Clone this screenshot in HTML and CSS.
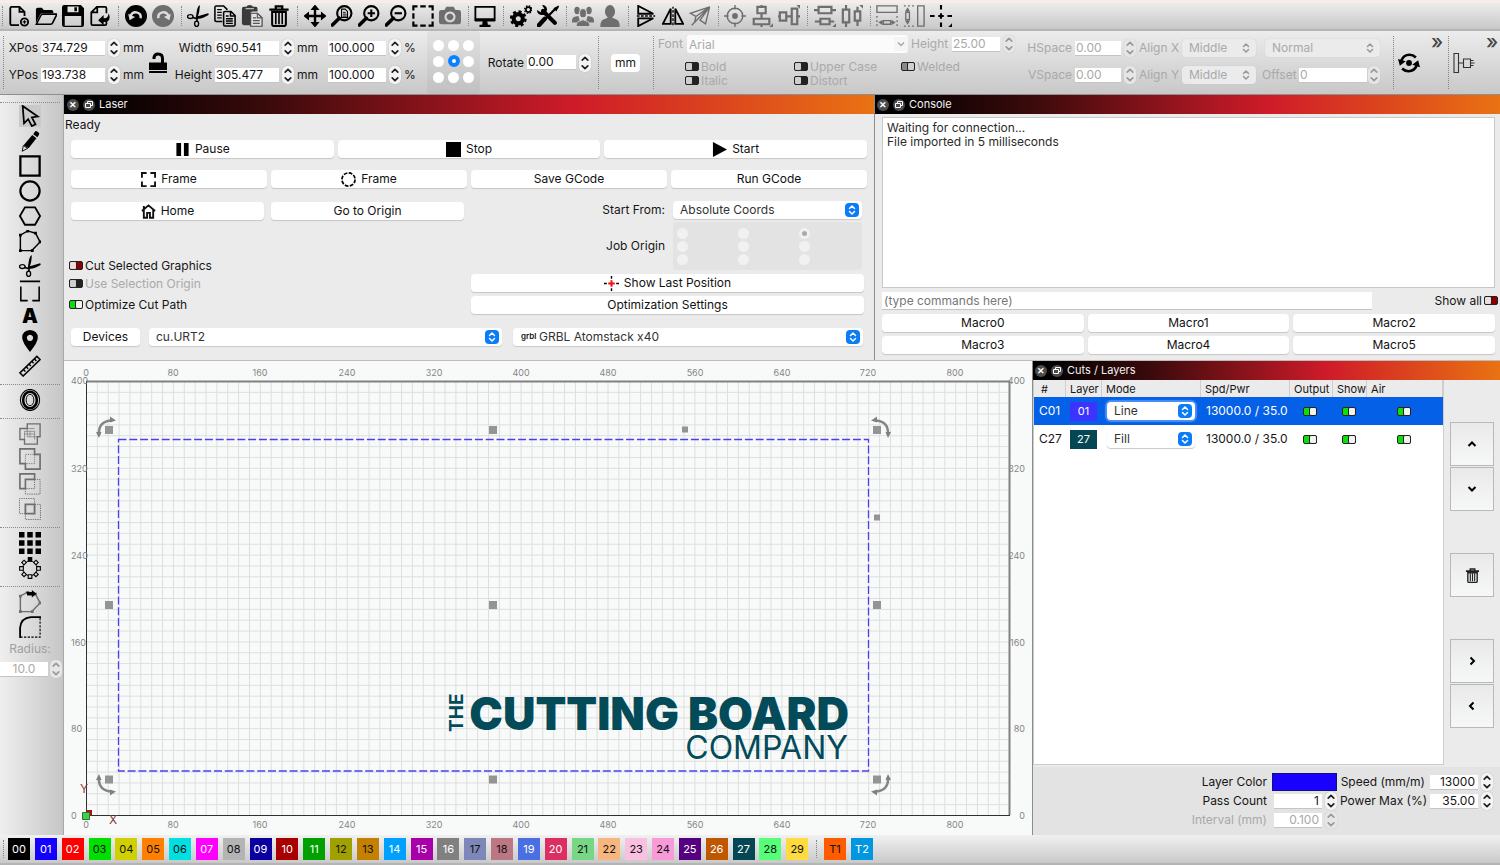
FILE: index.html
```html
<!DOCTYPE html>
<html lang="en">
<head>
<meta charset="utf-8">
<title>Laser workspace</title>
<link rel="stylesheet" href="styles.css">
</head>
<body>
<svg class="defs" aria-hidden="true">
  <symbol id="step" viewBox="0 0 10 16"><path d="M2.500 5.500 5 3l2.500 2.500M2.500 10.500 5 13l2.500-2.500" fill="none" stroke="currentColor" stroke-width="1.500" stroke-linecap="round" stroke-linejoin="round"/></symbol>
  <symbol id="updown" viewBox="0 0 14 14"><path d="M4.500 5.500 7 3l2.500 2.500M4.500 8.500 7 11l2.500-2.500" fill="none" stroke="currentColor" stroke-width="1.500" stroke-linecap="round" stroke-linejoin="round"/></symbol>
  <symbol id="new" viewBox="0 0 24 24"><path d="M12 22H4a1.500 1.500 0 0 1-1.500-1.500v-17A1.500 1.500 0 0 1 4 2h8.500L18 7.500V12M12.500 2v5.500H18" fill="none" stroke="currentColor" stroke-width="2"/><circle cx="18" cy="18.500" r="4" fill="none" stroke="currentColor" stroke-width="2"/><path d="M18 16.500v4M16 18.500h4" stroke="currentColor" stroke-width="1.300"/></symbol>
  <symbol id="open" viewBox="0 0 24 24"><path d="M1 20V5q0-2 2-2h4.500l2 2.500H18q2 0 2 2V9H8Q6.500 9 5.800 10.200z"/><path d="M1.500 21 6.500 11.200Q7 10 8.500 10H24l-4.800 9.600Q18.600 21 17 21z" fill="none" stroke="currentColor" stroke-width="1.800"/></symbol>
  <symbol id="save" viewBox="0 0 24 24"><path fill-rule="evenodd" d="M0 2.500Q0 0 2.500 0h18L24 3.500v18q0 2.500-2.500 2.500h-19Q0 24 0 21.500zM6 1.500V8h12V1.500zM3 12v10.500h18V12zM13.500 2.500h2.800v4.200h-2.800z"/></symbol>
  <symbol id="export" viewBox="0 0 24 24"><path d="M19 17v3.500a1.500 1.500 0 0 1-1.500 1.500H4a1.500 1.500 0 0 1-1.500-1.500V8L8.500 2h9A1.500 1.500 0 0 1 19 3.500V9M9 2v6H3" fill="none" stroke="currentColor" stroke-width="1.900"/><path d="M10 16.500 16 11v3.500q5 .5 5.500-5.500 3.500 9.500-5.500 9.500V22z"/></symbol>
  <symbol id="undo" viewBox="0 0 24 24"><circle cx="12" cy="12" r="12"/><path d="M6 12.500Q7.500 7.500 12.500 8q5.500 1 4.500 6.500" fill="none" stroke="#dcdcdc" stroke-width="2.600"/><path d="M3.500 9.500 5 16.500l6-3.500z" fill="#dcdcdc"/></symbol>
  <symbol id="cut" viewBox="0 0 24 24"><path d="M9.500 14.500 11 5q1-4 3-5-.2 8-2.200 12.200L23 9q1 .5.500 2-7 4.500-12 4z"/><ellipse cx="3.600" cy="12.600" rx="3" ry="2.100" fill="none" stroke="currentColor" stroke-width="1.500"/><ellipse cx="10.500" cy="20.500" rx="2.200" ry="2.900" fill="none" stroke="currentColor" stroke-width="1.500"/><path d="m6 13.500 5 1.500-.3 3" fill="none" stroke="currentColor" stroke-width="1.800"/></symbol>
  <symbol id="copy" viewBox="0 0 24 24"><path d="M9 18H2.500Q1 18 1 16.500v-14Q1 1 2.500 1h8L14 4.500v1M10.500 17.500v-9Q10.500 7 12 7h6.500L23 11.500v10q0 1.500-1.500 1.500H12q-1.500 0-1.500-1.500zM18 7v5h5" fill="none" stroke="currentColor" stroke-width="1.700"/><path d="M3.500 5h5M3.500 8h5M3.500 11h5M3.500 14h5M13 12h3M13 15h7.500M13 17.500h7.500M13 20h7.500" stroke="currentColor" stroke-width="1.500"/></symbol>
  <symbol id="paste" viewBox="0 0 24 24"><path d="M1 4q0-2 2-2h3q.5-2 3.500-2T13 2h3q2 0 2 2v3h-5q-3 0-3 3v12H3q-2 0-2-2z" fill="#3a3a3a"/><path d="M5 4h9" stroke="#ccc" stroke-width="1.200"/><path d="M10.500 9H18l5 5v9.200H10.500z" fill="#e2e2e2" stroke="#444" stroke-width="1.300"/><path d="M13 14h3.500M13 17h7.500M13 20h7.500M17.800 9v5H23" fill="none" stroke="#555" stroke-width="1.200"/></symbol>
  <symbol id="trash" viewBox="0 0 24 24"><path d="M1.500 5h21M8.500 4.500V1.500h7v3" fill="none" stroke="currentColor" stroke-width="2.500"/><path d="M4.500 7.500V21q0 2 2 2h11q2 0 2-2V7.500z" fill="none" stroke="currentColor" stroke-width="2.200"/><path d="M8.500 8.500V21M12 8.500V21M15.500 8.500V21" stroke="currentColor" stroke-width="1.800"/></symbol>
  <symbol id="move" viewBox="0 0 24 24"><path d="M12 2v20M2 12h20" stroke="currentColor" stroke-width="2.600"/><path d="m12-.5 5 6H7zM12 24.500l5-6H7zM-.5 12l6-5v10zM24.500 12l-6-5v10z"/></symbol>
  <symbol id="lens" viewBox="0 0 24 24"><circle cx="14.500" cy="9" r="7.800" fill="none" stroke="currentColor" stroke-width="2.300"/><path d="m9 14.500-7.500 7.300" stroke="currentColor" stroke-width="4" stroke-linecap="round"/></symbol>
  <symbol id="zoomdoc" viewBox="0 0 24 24"><use href="#lens"/><path d="M11.500 4.500h4l2.500 2.500v6.500h-6.500z" fill="none" stroke="currentColor" stroke-width="1.200"/><path d="M13 8h3M13 10h4M13 12h4" stroke="currentColor"/></symbol>
  <symbol id="zoomin" viewBox="0 0 24 24"><use href="#lens"/><path d="M10.500 9h8M14.500 5v8" stroke="currentColor" stroke-width="2.300"/></symbol>
  <symbol id="zoomout" viewBox="0 0 24 24"><use href="#lens"/><path d="M10.500 9h8" stroke="currentColor" stroke-width="2.300"/></symbol>
  <symbol id="frame" viewBox="0 0 24 24"><path d="M1.500 6V1.500H6M18 1.500h4.500V6M22.500 18v4.500H18M6 22.500H1.500V18M9 1.500h6M9 22.500h6M1.500 9v6M22.500 9v6" fill="none" stroke="currentColor" stroke-width="2.400"/></symbol>
  <symbol id="camera" viewBox="0 0 24 24"><path fill-rule="evenodd" d="M0 8q0-2.500 2.500-2.500H6L8 2h8l2 3.500h3.500Q24 5.500 24 8v10.500q0 2.500-2.500 2.500h-19Q0 21 0 18.500zM12 7a6 6 0 1 0 .01 0zm0 2.300a3.700 3.700 0 1 1-.01 0z"/></symbol>
  <symbol id="monitor" viewBox="0 0 24 24"><path d="M1.500 2h21v14.500h-21z" fill="none" stroke="currentColor" stroke-width="2"/><path d="M1 14.500h22V18H1zM9.500 18h5l.7 3.500H18V24H6v-2.500h2.800z"/></symbol>
  <symbol id="gears" viewBox="0 0 24 24"><circle cx="9" cy="15" r="5" fill="none" stroke="currentColor" stroke-width="4.500"/><circle cx="9" cy="15" r="7.800" fill="none" stroke="currentColor" stroke-width="2.800" stroke-dasharray="3.300 2.830"/><circle cx="20" cy="5" r="2.700" fill="none" stroke="currentColor" stroke-width="1.800"/><circle cx="20" cy="5" r="4" fill="none" stroke="currentColor" stroke-width="1.500" stroke-dasharray="1.700 1.440"/></symbol>
  <symbol id="tools" viewBox="0 0 24 24"><path d="m6.500 6.500 13 13" stroke="currentColor" stroke-width="4.600" stroke-linecap="round"/><path d="M0 5.500 4 8l4-4L5.500 0q5 0 5.500 5l-1 3.500L7 11 5 11Q0 10.500 0 5.500z"/><path d="M20.500 3.500 4 20.500" stroke="currentColor" stroke-width="2.400"/><path d="m2 22 6.500-7" stroke="currentColor" stroke-width="4.800" stroke-linecap="round"/><path d="m18 3.500 5.500-3L24 2l-3 5z"/></symbol>
  <symbol id="users" viewBox="0 0 24 24"><ellipse cx="5.500" cy="6" rx="3" ry="4"/><ellipse cx="18.500" cy="6" rx="3" ry="4"/><path d="M0 17.500q0-4.500 4-5l3-.5 2 7H0zM24 17.500q0-4.500-4-5l-3-.5-2 7h9z"/><ellipse cx="12" cy="9" rx="3.800" ry="5" stroke="#ddd"/><path d="M4.500 23.500q0-5.500 4-6l3.500-1.500 3.500 1.500q4 .5 4 6z" stroke="#d3d3d3"/></symbol>
  <symbol id="user" viewBox="0 0 24 24"><ellipse cx="12" cy="7" rx="5.500" ry="7"/><path d="M1.500 24q-.5-7 4-8.500l4-1.500V12h5v2l4 1.500q4.500 1.500 4 8.500z"/></symbol>
  <symbol id="flipv" viewBox="0 0 24 24"><path d="M3.500 1v8.500H20zM3.500 23v-8.500H20z" fill="none" stroke="currentColor" stroke-width="2"/><path d="M2 12h20" stroke="currentColor" stroke-width="1.500" stroke-dasharray="3 1.500"/></symbol>
  <symbol id="plane" viewBox="0 0 24 24"><path d="M22.500 2 1.500 9l6 3.500zM22.500 2 18 20.500l-6-4zM3 22 22.500 2M7.500 12.500 6 19.500" fill="none" stroke="currentColor" stroke-width="1.500"/></symbol>
  <symbol id="target" viewBox="0 0 24 24"><circle cx="12" cy="12" r="8.500" fill="none" stroke="currentColor" stroke-width="1.600"/><circle cx="12" cy="12" r="3.200"/><path d="M12 0v5M12 19v5M0 12h5M19 12h5" stroke="currentColor" stroke-width="1.500"/></symbol>
  <symbol id="alignv" viewBox="0 0 24 24"><path d="M7 2h9v7H7zM3 15h17v6H3zM11.500 0v2M11.500 10v5M11.500 21v3" fill="none" stroke="currentColor" stroke-width="2.400"/><path d="M24 20v4h-4z"/></symbol>
  <symbol id="distv" viewBox="0 0 24 24"><path d="M5 2h14v7H5zM7 15h10v6H7zM0 5.500h5M19 5.500h5M1 18h6M17 18h5" fill="none" stroke="currentColor" stroke-width="2.400"/><path d="M24 20v4h-4z"/></symbol>
  <symbol id="samew" viewBox="0 0 24 24"><path d="M1 1h22v7H1zM8 17h8v4H8zM3 19h5M16 19h5" fill="none" stroke="currentColor" stroke-width="1.500"/><path d="m3 19 4-3v6zM21 19l-4-3v6z"/><path d="M1 12v12M23 12v12" stroke="currentColor" stroke-width="1.500" stroke-dasharray="2 2.500"/></symbol>
  <symbol id="center" viewBox="0 0 24 24"><path d="M12 0v5M12 9v6M12 19v5M0 12h5M9 12h6M19 12h5" stroke="currentColor" stroke-width="2.300"/><path d="M24 20v4h-4z"/></symbol>
  <symbol id="arrow" viewBox="0 0 24 24"><path d="m4 1 1.500 19 4.500-4.500 4 7.500 4-2-4-7.500 6.500-1z" fill="none" stroke="currentColor" stroke-width="1.900"/></symbol>
  <symbol id="pencil" viewBox="0 0 24 24"><path d="M14.500 5.500 19 9l-8.500 11L5 16.500z"/><path d="m4.700 17-1.200 6.200L9.500 20z" fill="none" stroke="currentColor" stroke-width="1"/><path d="m15.500 4.500 1.800-2.700q1-1.300 2.500-.3l1.500 1.200q1.500 1 .5 2.500L20 8z"/></symbol>
  <symbol id="poly" viewBox="0 0 24 24"><path d="M1.500 5.500 9.500 1l8.500 2.500 5 9.500-9 9.500H1.500z" fill="none" stroke="currentColor" stroke-width="1.600"/><path d="M0 4h3v3H0zM8-.3h3v3H8zM16.500 2h3v3h-3zM21.500 11.500h3v3h-3zM13 21h3v3h-3zM0 21h3v3H0z"/></symbol>
  <symbol id="bracket" viewBox="0 0 24 24"><path d="M1 1.500h22M2 7v15.500h7.500M22 7v15.500h-7.500" fill="none" stroke="currentColor" stroke-width="1.700"/></symbol>
  <symbol id="pin" viewBox="0 0 24 24"><path fill-rule="evenodd" d="M12 0q8.500.5 8.500 8.500 0 5-8.500 15.500Q3.500 13.500 3.500 8.500 3.500.5 12 0zm0 5.200a3.400 3.400 0 1 0 .01 0z"/></symbol>
  <symbol id="ruler" viewBox="0 0 24 24"><path d="M1 19.500 19.500 1.500 23 5 4.500 23zM5 16l2 2M8 13l2 2M11 10l2 2M14 7l2 2M17 4.500l2 2" fill="none" stroke="currentColor" stroke-width="1.600"/></symbol>
  <symbol id="offset" viewBox="0 0 24 24"><ellipse cx="12" cy="12" rx="10.500" ry="11.500" fill="none" stroke="currentColor" stroke-width="1.200"/><ellipse cx="12" cy="12" rx="7.500" ry="9" fill="none" stroke="currentColor" stroke-width="2.800"/><ellipse cx="12" cy="12" rx="4.200" ry="6.200" fill="none" stroke="currentColor" stroke-width="1"/></symbol>
  <symbol id="weld" viewBox="0 0 24 24"><path d="M1 6h8V1h14v14h-3v8H6v-5H1z" fill="none" stroke="currentColor" stroke-width="1.500"/><path d="M6 9h11v9M9 6v9h11M6 18V9M17 6H9M12 9v6M6 12h11" fill="none" stroke="currentColor" stroke-width=".7"/></symbol>
  <symbol id="union" viewBox="0 0 24 24"><path d="M1 1h16v6h6v16H7v-6H1z" fill="none" stroke="currentColor" stroke-width="1.800"/><path d="M7 17V7h10v10z" fill="none" stroke="currentColor" stroke-width=".8" stroke-dasharray="1.500 1"/></symbol>
  <symbol id="subtract" viewBox="0 0 24 24"><path d="M1 1h16v6H7v10H1z" fill="none" stroke="currentColor" stroke-width="1.800"/><path d="M17 7h6v16H7v-6h10z" fill="none" stroke="currentColor" stroke-dasharray="1.500 1"/></symbol>
  <symbol id="intersect" viewBox="0 0 24 24"><path d="M7 17H.5V.5H17V7M17 7h6.500v16.500H7V17" fill="none" stroke="currentColor" stroke-dasharray="1.500 1"/><path d="M7 7h10v10H7z" fill="none" stroke="currentColor" stroke-width="2"/></symbol>
  <symbol id="array" viewBox="0 0 24 24"><path d="M0 0h6v6H0zM9 0h6v6H9zM18 0h6v6h-6zM0 9h6v6H0zM9 9h6v6H9zM18 9h6v6h-6zM0 18h6v6H0zM9 18h6v6H9zM18 18h6v6h-6z"/></symbol>
  <symbol id="circular" viewBox="0 0 24 24"><path d="M9.500 0h5v5h-5z"/><circle cx="12" cy="12.500" r="8" fill="none" stroke="currentColor"/><g fill="#ddd" stroke="currentColor" stroke-width="1.200"><path d="M.7 10.500h4v4h-4zM19.300 10.500h4v4h-4zM10 19.300h4v4h-4z"/><path d="m5.500 3.500 2.500 2.500-2.500 2.500L3 6zM18.500 3.500 21 6l-2.500 2.500L16 6zM5.500 16.500 8 19l-2.500 2.500L3 19zM18.500 16.500 21 19l-2.500 2.500L16 19z"/></g></symbol>
  <symbol id="radius" viewBox="0 0 24 24"><path d="M1.200 24V13Q2 2 13 1.200h11" fill="none" stroke="currentColor" stroke-width="2"/><path d="M23 2v21H1" fill="none" stroke="currentColor" stroke-width="1.200" stroke-dasharray="2.500 1.500"/></symbol>
  <symbol id="corners" viewBox="0 0 16 16"><path d="M1 6V1h5M10 1h5v5M15 10v5h-5M6 15H1v-5" fill="none" stroke="currentColor" stroke-width="2"/></symbol>
  <symbol id="home" viewBox="0 0 16 16"><path d="M1 7.500 8 1.500l7 6M3 6v8.700h3.500V9.500h3v5.200H13V6M3 5V2" fill="none" stroke="currentColor" stroke-width="2"/></symbol>
</svg>

<header class="toolbar toolbar-main">
  <i class="grip first"></i>
  <button class="tool" aria-label="New"><svg><use href="#new"/></svg></button>
  <button class="tool" aria-label="Open"><svg><use href="#open"/></svg></button>
  <button class="tool" aria-label="Save"><svg><use href="#save"/></svg></button>
  <button class="tool" aria-label="Import"><svg><use href="#export"/></svg></button>
  <i class="grip"></i>
  <button class="tool" aria-label="Undo"><svg><use href="#undo"/></svg></button>
  <button class="tool dim mirror" aria-label="Redo"><svg><use href="#undo"/></svg></button>
  <i class="grip"></i>
  <button class="tool" aria-label="Cut"><svg><use href="#cut"/></svg></button>
  <button class="tool" aria-label="Copy"><svg><use href="#copy"/></svg></button>
  <button class="tool" aria-label="Paste"><svg><use href="#paste"/></svg></button>
  <button class="tool" aria-label="Delete"><svg><use href="#trash"/></svg></button>
  <i class="grip"></i>
  <button class="tool" aria-label="Pan"><svg><use href="#move"/></svg></button>
  <button class="tool" aria-label="Zoom to page"><svg><use href="#zoomdoc"/></svg></button>
  <button class="tool" aria-label="Zoom in"><svg><use href="#zoomin"/></svg></button>
  <button class="tool" aria-label="Zoom out"><svg><use href="#zoomout"/></svg></button>
  <button class="tool" aria-label="Frame selection"><svg><use href="#frame"/></svg></button>
  <button class="tool dim" aria-label="Camera"><svg><use href="#camera"/></svg></button>
  <i class="grip"></i>
  <button class="tool" aria-label="Preview"><svg><use href="#monitor"/></svg></button>
  <i class="grip"></i>
  <button class="tool" aria-label="Settings"><svg><use href="#gears"/></svg></button>
  <button class="tool" aria-label="Device settings"><svg><use href="#tools"/></svg></button>
  <i class="grip"></i>
  <button class="tool dim" aria-label="Group"><svg><use href="#users"/></svg></button>
  <button class="tool dim" aria-label="Ungroup"><svg><use href="#user"/></svg></button>
  <i class="grip"></i>
  <button class="tool" aria-label="Flip vertical"><svg><use href="#flipv"/></svg></button>
  <button class="tool turn" aria-label="Flip horizontal"><svg><use href="#flipv"/></svg></button>
  <button class="tool dim" aria-label="Mirror across line"><svg><use href="#plane"/></svg></button>
  <i class="grip"></i>
  <button class="tool dim" aria-label="Align centers"><svg><use href="#target"/></svg></button>
  <button class="tool dim" aria-label="Align vertical"><svg><use href="#alignv"/></svg></button>
  <button class="tool dim turn" aria-label="Align horizontal"><svg><use href="#alignv"/></svg></button>
  <i class="grip"></i>
  <button class="tool dim" aria-label="Distribute vertical"><svg><use href="#distv"/></svg></button>
  <button class="tool dim turn" aria-label="Distribute horizontal"><svg><use href="#distv"/></svg></button>
  <i class="grip"></i>
  <button class="tool dim" aria-label="Same width"><svg><use href="#samew"/></svg></button>
  <button class="tool dim turnback" aria-label="Same height"><svg><use href="#samew"/></svg></button>
  <button class="tool" aria-label="Move to page center"><svg><use href="#center"/></svg></button>
</header>

<section class="toolbar toolbar-props">
  <i class="grip tall"></i>
  <div class="fields fields-pos">
    <label for="xpos">XPos</label><input id="xpos" value="374.729"><button class="step" aria-label="Step X"><svg><use href="#step"/></svg></button><span>mm</span>
    <label for="ypos">YPos</label><input id="ypos" value="193.738"><button class="step" aria-label="Step Y"><svg><use href="#step"/></svg></button><span>mm</span>
  </div>
  <button class="lock" aria-label="Lock aspect ratio"><svg viewBox="0 0 18 22"><path d="M5 7V5.500Q5.500 2 9 2q4.500 0 4.500 4.500V11" fill="none" stroke="#000" stroke-width="3"/><path d="M0 10.500h18V18H0zM0 19h18v2H0z"/></svg></button>
  <div class="fields fields-size">
    <label for="w">Width</label><input id="w" value="690.541"><button class="step" aria-label="Step width"><svg><use href="#step"/></svg></button><span>mm</span><input aria-label="Width percent" value="100.000"><button class="step" aria-label="Step width percent"><svg><use href="#step"/></svg></button><span>%</span>
    <label for="h">Height</label><input id="h" value="305.477"><button class="step" aria-label="Step height"><svg><use href="#step"/></svg></button><span>mm</span><input aria-label="Height percent" value="100.000"><button class="step" aria-label="Step height percent"><svg><use href="#step"/></svg></button><span>%</span>
  </div>
  <div class="anchor">
    <input type="radio" name="anchor" aria-label="Top left"><input type="radio" name="anchor" aria-label="Top"><input type="radio" name="anchor" aria-label="Top right">
    <input type="radio" name="anchor" aria-label="Left"><input type="radio" name="anchor" aria-label="Center" checked><input type="radio" name="anchor" aria-label="Right">
    <input type="radio" name="anchor" aria-label="Bottom left"><input type="radio" name="anchor" aria-label="Bottom"><input type="radio" name="anchor" aria-label="Bottom right">
  </div>
  <div class="fields fields-rotate">
    <label for="rot">Rotate</label><input id="rot" value="0.00"><button class="step" aria-label="Step rotation"><svg><use href="#step"/></svg></button>
  </div>
  <i class="grip tall"></i>
  <button class="unit">mm</button>
  <i class="grip tall"></i>
  <div class="font-box off">
    <div class="font-row">
      <label for="font">Font</label>
      <span class="combo"><input id="font" value="Arial" disabled><svg viewBox="0 0 14 14"><path d="m4 5.500 3 3 3-3" fill="none" stroke="currentColor" stroke-width="1.500"/></svg></span>
      <label for="fh">Height</label><input id="fh" class="fh" value="25.00" disabled><button class="step" aria-label="Step font height" disabled><svg><use href="#step"/></svg></button>
    </div>
    <div class="font-flags">
      <label><input class="toggle" type="checkbox" disabled>Bold</label><label><input class="toggle" type="checkbox" disabled>Upper Case</label><label><input class="toggle" type="checkbox" checked disabled>Welded</label>
      <label><input class="toggle" type="checkbox" disabled>Italic</label><label><input class="toggle" type="checkbox" disabled>Distort</label>
    </div>
  </div>
  <div class="fields fields-space off">
    <label for="hs">HSpace</label><input id="hs" value="0.00" disabled><button class="step" aria-label="Step HSpace" disabled><svg><use href="#step"/></svg></button><label for="ax">Align X</label><span class="select"><select id="ax" disabled><option>Middle</option></select><svg><use href="#updown"/></svg></span>
    <label for="vs">VSpace</label><input id="vs" value="0.00" disabled><button class="step" aria-label="Step VSpace" disabled><svg><use href="#step"/></svg></button><label for="ay">Align Y</label><span class="select"><select id="ay" disabled><option>Middle</option></select><svg><use href="#updown"/></svg></span>
  </div>
  <div class="style-box off">
    <span class="select"><select aria-label="Text style" disabled><option>Normal</option></select><svg><use href="#updown"/></svg></span>
    <div class="offset-row"><label for="off">Offset</label><input id="off" value="0" disabled><button class="step" aria-label="Step offset" disabled><svg><use href="#step"/></svg></button></div>
  </div>
  <i class="grip tall"></i>
  <button class="plain" aria-label="Refresh"><svg viewBox="0 0 24 22"><circle cx="12" cy="11" r="3.200"/><path d="M3.500 8.500Q6 2 12.500 2q4 0 7 3M20.500 13.500Q18 20 11.500 20q-4 0-7-3" fill="none" stroke="#000" stroke-width="2.800"/><path d="M0 6.500 8.500 9 2 14zM24 15.500 15.500 13 22 8z"/></svg></button>
  <button class="more" aria-label="More">»</button>
  <i class="grip tall"></i>
  <button class="plain" aria-label="Docking"><svg viewBox="0 0 22 22"><path d="M1 1.500h4.500v19H1zM10.500 7h7v8.500h-7zM5.500 11h5M17.500 8.500h3M17.500 11h4M17.500 13.500h3" fill="none" stroke="#333" stroke-width="1.100"/></svg></button>
  <button class="more" aria-label="More">»</button>
</section>

<main class="work">
  <nav class="side">
    <i class="rule"></i>
    <button class="tool selected" aria-label="Select"><svg><use href="#arrow"/></svg></button>
    <button class="tool" aria-label="Draw lines"><svg><use href="#pencil"/></svg></button>
    <button class="tool" aria-label="Rectangle"><svg viewBox="0 0 24 24"><path d="M1.500 1.500h21v21h-21z" fill="none" stroke="#000" stroke-width="2.500"/></svg></button>
    <button class="tool" aria-label="Ellipse"><svg viewBox="0 0 24 24"><circle cx="12" cy="12" r="10.500" fill="none" stroke="#000" stroke-width="2.400"/></svg></button>
    <button class="tool" aria-label="Polygon"><svg viewBox="0 0 24 24"><path d="M6.500 2.500h11L23 12l-5.500 9.500h-11L1 12z" fill="none" stroke="#000" stroke-width="2"/></svg></button>
    <button class="tool" aria-label="Edit nodes"><svg><use href="#poly"/></svg></button>
    <button class="tool" aria-label="Trim shapes"><svg><use href="#cut"/></svg></button>
    <button class="tool" aria-label="Tabs"><svg><use href="#bracket"/></svg></button>
    <button class="tool letter" aria-label="Text">A</button>
    <button class="tool" aria-label="Position laser"><svg><use href="#pin"/></svg></button>
    <button class="tool" aria-label="Measure"><svg><use href="#ruler"/></svg></button>
    <i class="rule"></i>
    <button class="tool" aria-label="Offset shapes"><svg><use href="#offset"/></svg></button>
    <i class="rule"></i>
    <button class="tool dim" aria-label="Weld"><svg><use href="#weld"/></svg></button>
    <button class="tool dim" aria-label="Union"><svg><use href="#union"/></svg></button>
    <button class="tool dim" aria-label="Subtract"><svg><use href="#subtract"/></svg></button>
    <button class="tool dim" aria-label="Intersection"><svg><use href="#intersect"/></svg></button>
    <i class="rule"></i>
    <button class="tool" aria-label="Grid array"><svg><use href="#array"/></svg></button>
    <button class="tool" aria-label="Circular array"><svg><use href="#circular"/></svg></button>
    <i class="rule"></i>
    <button class="tool dim" aria-label="Start point"><svg viewBox="0 0 24 24"><use href="#poly"/><path d="M8 1h6v-2l5 4-5 4V5H9z" fill="#000"/></svg></button>
    <button class="tool" aria-label="Fillet"><svg><use href="#radius"/></svg></button>
    <label class="radius-label" for="radius">Radius:</label>
    <div class="radius-row off"><input id="radius" value="10.0" disabled><button class="step" aria-label="Step radius" disabled><svg><use href="#step"/></svg></button></div>
  </nav>

  <div class="docks">
    <div class="upper">
      <section class="panel laser">
        <h2 class="title"><button aria-label="Close">✕</button><button aria-label="Float"><svg viewBox="0 0 10 10"><path d="M3.500 3.500v-2h5v4h-2M1.500 3.500h5v4h-5z" fill="none" stroke="#fff"/></svg></button>Laser</h2>
        <p class="status">Ready</p>
        <div class="row three">
          <button class="btn"><svg viewBox="0 0 16 16"><path d="M1.500 1h5v14h-5zM9.500 1h5v14h-5z"/></svg>Pause</button>
          <button class="btn"><svg viewBox="0 0 16 16"><path d="M0 0h16v16H0z"/></svg>Stop</button>
          <button class="btn"><svg viewBox="0 0 16 16"><path d="M1 0v16l15-8z"/></svg>Start</button>
        </div>
        <div class="row four">
          <button class="btn"><svg><use href="#corners"/></svg>Frame</button>
          <button class="btn"><svg viewBox="0 0 16 16"><circle cx="8" cy="8" r="7" fill="none" stroke="#000" stroke-width="1.800" stroke-dasharray="4 1.500"/></svg>Frame</button>
          <button class="btn">Save GCode</button>
          <button class="btn">Run GCode</button>
        </div>
        <div class="halves">
          <div class="left">
            <div class="pair"><button class="btn"><svg><use href="#home"/></svg>Home</button><button class="btn">Go to Origin</button></div>
            <div class="checks">
              <label><input class="toggle" type="checkbox">Cut Selected Graphics</label>
              <label class="faint"><input class="toggle" type="checkbox" disabled>Use Selection Origin</label>
              <label><input class="toggle" type="checkbox" checked>Optimize Cut Path</label>
            </div>
          </div>
          <div class="right">
            <div class="origin-grid">
              <label for="from">Start From:</label><span class="select"><select id="from"><option>Absolute Coords</option></select><svg><use href="#updown"/></svg></span>
              <span>Job Origin</span>
              <div class="job">
                <input type="radio" name="job" aria-label="Top left" disabled><input type="radio" name="job" aria-label="Top" disabled><input type="radio" name="job" aria-label="Top right" checked disabled>
                <input type="radio" name="job" aria-label="Left" disabled><input type="radio" name="job" aria-label="Center" disabled><input type="radio" name="job" aria-label="Right" disabled>
                <input type="radio" name="job" aria-label="Bottom left" disabled><input type="radio" name="job" aria-label="Bottom" disabled><input type="radio" name="job" aria-label="Bottom right" disabled>
              </div>
            </div>
            <button class="btn"><svg viewBox="0 0 16 16"><path d="M8 0v3M8 13v3M0 8h3M13 8h3" stroke="#000" stroke-width="1.500"/><path d="M8 4.500v7M4.500 8h7" stroke="#f01010" stroke-width="2.200"/></svg>Show Last Position</button>
            <button class="btn">Optimization Settings</button>
          </div>
        </div>
        <div class="devices">
          <button class="btn">Devices</button>
          <span class="select"><select aria-label="Port"><option>cu.URT2</option></select><svg><use href="#updown"/></svg></span>
          <span class="select grbl"><i>grbl</i><select aria-label="Device"><option>GRBL Atomstack x40</option></select><svg><use href="#updown"/></svg></span>
        </div>
      </section>

      <section class="panel console">
        <h2 class="title"><button aria-label="Close">✕</button><button aria-label="Float"><svg viewBox="0 0 10 10"><path d="M3.500 3.500v-2h5v4h-2M1.500 3.500h5v4h-5z" fill="none" stroke="#fff"/></svg></button>Console</h2>
        <div class="console-body">
          <textarea aria-label="Console output" readonly>Waiting for connection...
File imported in 5 milliseconds</textarea>
          <div class="command"><input aria-label="Command" placeholder="(type commands here)"><label>Show all<input class="toggle" type="checkbox"></label></div>
          <div class="macros">
            <button class="btn">Macro0</button><button class="btn">Macro1</button><button class="btn">Macro2</button>
            <button class="btn">Macro3</button><button class="btn">Macro4</button><button class="btn">Macro5</button>
          </div>
        </div>
      </section>
    </div>

    <div class="lower">
      <svg class="canvas" viewBox="64 361 968 474" preserveAspectRatio="xMinYMin meet">
        <defs>
          <pattern id="grid" x="86" y="381" width="10.865" height="10.850" patternUnits="userSpaceOnUse"><path d="M0 .5h11M.5 0v11" stroke="#dddfde" fill="none"/></pattern>
          <g id="spin"><path d="M-10 6Q-11-8 3-8.500" fill="none" stroke="#858585" stroke-width="2.500"/><path d="m1-12.500 6 4-6 2zM-13 3l3 6 2.500-6z" fill="#808080"/></g>
        </defs>
        <path d="M86 381h923v434H86z" fill="url(#grid)"/>
        <path d="M86 381.500h923.500V815" fill="none" stroke="#808080" stroke-width="2"/>
        <path d="M86.500 381v434.500H1010" fill="none" stroke="#303030"/>
        <g class="ruler mid">
          <text x="86" y="376">0</text><text x="173" y="376">80</text><text x="260" y="376">160</text><text x="347" y="376">240</text><text x="434" y="376">320</text><text x="521" y="376">400</text><text x="608" y="376">480</text><text x="695" y="376">560</text><text x="782" y="376">640</text><text x="868" y="376">720</text><text x="955" y="376">800</text>
          <text x="86" y="828">0</text><text x="173" y="828">80</text><text x="260" y="828">160</text><text x="347" y="828">240</text><text x="434" y="828">320</text><text x="521" y="828">400</text><text x="608" y="828">480</text><text x="695" y="828">560</text><text x="782" y="828">640</text><text x="868" y="828">720</text><text x="955" y="828">800</text>
        </g>
        <g class="ruler">
          <text x="71" y="384">400</text><text x="71" y="472">320</text><text x="71" y="559">240</text><text x="71" y="646">160</text><text x="71" y="732">80</text><text x="71" y="819">0</text>
        </g>
        <g class="ruler end">
          <text x="1025" y="384">400</text><text x="1025" y="472">320</text><text x="1025" y="559">240</text><text x="1025" y="646">160</text><text x="1025" y="732">80</text><text x="1025" y="819">0</text>
        </g>
        <g class="axis"><text x="80" y="793">Y</text><text x="109" y="824">X</text></g>
        <path d="M86 810h6v6h-6z" fill="#a01414"/><path d="M82.500 812.500h7v7h-7z" fill="#3ecf4c" stroke="#2a7a32"/>
        <path d="M118.500 439.500h750v331.500h-750z" fill="none" stroke="#4b40f0" stroke-width="1.300" stroke-dasharray="8 2.800"/>
        <path d="M105 426h8v8h-8zM489 426h8v8h-8zM873 426h8v8h-8zM105 601h8v8h-8zM489 601h8v8h-8zM873 601h8v8h-8zM105 775.500h8v8h-8zM489 775.500h8v8h-8zM873 775.500h8v8h-8zM682 426.500h6v6h-6zM874 514.500h6v6h-6z" fill="#949494"/>
        <use href="#spin" x="109" y="429"/>
        <use href="#spin" transform="translate(878 429) scale(-1 1)"/>
        <use href="#spin" transform="translate(109 783) scale(1 -1)"/>
        <use href="#spin" transform="translate(878 783) scale(-1 -1)"/>
        <g class="logo">
          <text class="the" transform="translate(463 732) rotate(-90)">THE</text>
          <text class="cutting" x="849" y="730">CUTTING BOARD</text>
          <text class="company" x="848" y="759">COMPANY</text>
        </g>
      </svg>

      <section class="panel cuts">
        <h2 class="title"><button aria-label="Close">✕</button><button aria-label="Float"><svg viewBox="0 0 10 10"><path d="M3.500 3.500v-2h5v4h-2M1.500 3.500h5v4h-5z" fill="none" stroke="#fff"/></svg></button>Cuts / Layers</h2>
        <div class="cuts-body">
          <div class="table-wrap">
            <table>
              <colgroup><col class="c-num"><col class="c-layer"><col class="c-mode"><col class="c-spd"><col class="c-out"><col class="c-show"><col></colgroup>
              <thead><tr><th>#</th><th>Layer</th><th>Mode</th><th>Spd/Pwr</th><th>Output</th><th>Show</th><th>Air</th></tr></thead>
              <tbody>
                <tr class="active"><td>C01</td><td><b class="chip blue">01</b></td><td><span class="select"><select aria-label="Mode C01"><option>Line</option></select><svg><use href="#updown"/></svg></span></td><td>13000.0 / 35.0</td><td class="tick"><input class="toggle" type="checkbox" aria-label="Output C01" checked></td><td class="tick"><input class="toggle" type="checkbox" aria-label="Show C01" checked></td><td class="tick"><input class="toggle" type="checkbox" aria-label="Air C01" checked></td></tr>
                <tr><td>C27</td><td><b class="chip teal">27</b></td><td><span class="select"><select aria-label="Mode C27"><option>Fill</option></select><svg><use href="#updown"/></svg></span></td><td>13000.0 / 35.0</td><td class="tick"><input class="toggle" type="checkbox" aria-label="Output C27" checked></td><td class="tick"><input class="toggle" type="checkbox" aria-label="Show C27" checked></td><td class="tick"><input class="toggle" type="checkbox" aria-label="Air C27" checked></td></tr>
              </tbody>
            </table>
          </div>
          <div class="order">
            <button aria-label="Move up"><svg viewBox="0 0 12 12"><path d="m2.500 8 3.500-3.500L9.500 8"/></svg></button>
            <button aria-label="Move down"><svg viewBox="0 0 12 12"><path d="m2.500 4 3.500 3.500L9.500 4"/></svg></button>
            <button class="apart" aria-label="Delete layer"><svg class="bin"><use href="#trash"/></svg></button>
            <button class="apart" aria-label="Next"><svg viewBox="0 0 12 12"><path d="M4.500 2.500 8 6 4.500 9.500"/></svg></button>
            <button aria-label="Previous"><svg viewBox="0 0 12 12"><path d="M7.500 2.500 4 6l3.500 3.500"/></svg></button>
          </div>
        </div>
        <div class="params">
          <span>Layer Color</span><button class="swatch" aria-label="Layer Color"></button><label for="speed">Speed (mm/m)</label><input id="speed" value="13000"><button class="step" aria-label="Step speed"><svg><use href="#step"/></svg></button>
          <label for="pass">Pass Count</label><input id="pass" value="1"><button class="step" aria-label="Step pass count"><svg><use href="#step"/></svg></button><label for="power">Power Max (%)</label><input id="power" value="35.00"><button class="step" aria-label="Step power"><svg><use href="#step"/></svg></button>
          <label class="faint" for="interval">Interval (mm)</label><input id="interval" value="0.100" disabled><button class="step" aria-label="Step interval" disabled><svg><use href="#step"/></svg></button>
        </div>
      </section>
    </div>
  </div>
</main>

<footer class="palette">
  <i class="grip"></i>
  <div class="colors">
    <button class="k00 lt">00</button><button class="k01 lt">01</button><button class="k02 lt">02</button><button class="k03">03</button><button class="k04">04</button><button class="k05">05</button><button class="k06">06</button><button class="k07 lt">07</button><button class="k08">08</button><button class="k09 lt">09</button><button class="k10 lt">10</button><button class="k11 lt">11</button><button class="k12">12</button><button class="k13">13</button><button class="k14 lt">14</button><button class="k15 lt">15</button><button class="k16 lt">16</button><button class="k17">17</button><button class="k18">18</button><button class="k19 lt">19</button><button class="k20 lt">20</button><button class="k21">21</button><button class="k22">22</button><button class="k23">23</button><button class="k24">24</button><button class="k25 lt">25</button><button class="k26 lt">26</button><button class="k27 lt">27</button><button class="k28">28</button><button class="k29">29</button>
  </div>
  <i class="grip"></i>
  <div class="tools-colors"><button class="t1">T1</button><button class="t2 lt">T2</button></div>
</footer>
</body>
</html>
```
FILE: styles.css
```css
*, *::before { box-sizing: border-box; }
body { margin: 0; min-height: 100vh; display: flex; flex-direction: column; background: #ebebeb; color: #161616; font: 12px/16px Inter, "Liberation Sans", sans-serif; border-top: 3px solid #f6eeea; border-bottom: 2px solid #b4b4b4; }
button, input, select, textarea { font: inherit; color: inherit; margin: 0; border: 0; padding: 0; background: none; border-radius: 0; min-width: 0; }
h2, p { margin: 0; font-weight: 400; }
.defs { position: absolute; width: 0; height: 0; }
.off, .faint, input:disabled { color: #a9a9a9; }

/* toolbars */
.toolbar { display: flex; background: linear-gradient(#ececec, #c8c8c8); }
.toolbar-main { gap: 5px; height: 28px; border-bottom: 2px solid #b5b5b5; }
.grip { flex: none; width: 4px; align-self: stretch; margin: 3px 0; border-right: 1px dotted #858585; }
.toolbar-main .grip { width: 3px; margin-right: 1px; }
.toolbar-main .grip:nth-of-type(odd) { margin-right: 0; }
.tool { flex: none; width: 22px; height: 22px; padding: 0; display: block; align-self: center; color: #000; }
.tool svg { display: block; width: 22px; height: 22px; fill: currentColor; overflow: visible; }
.tool.dim { color: #6e6e6e; }
.mirror svg { transform: scaleX(-1); }
.turn svg { transform: rotate(-90deg); }
.turnback svg { transform: rotate(90deg); }
.letter { font-weight: 900; font-size: 20px; line-height: 22px; text-align: center; }

.toolbar-props { height: 64px; border-bottom: 1px solid #8f8f8f; align-items: center; }
.grip.tall { margin: 5px 0; }
.fields { display: grid; align-items: center; row-gap: 9px; padding-bottom: 2px; }
.fields > label { text-align: right; }
.fields input, .offset-row input, .fh, .radius-row input, .params input { height: 15px; background: #fff; padding: 0 1px; border-bottom: 1px solid #c4c4c4; }
.fields-pos { grid-template-columns: 34px 64px 12px 20px; column-gap: 3px; }
.fields-size { grid-template-columns: 41px 64px 12px 28px 58px 12px 10px; column-gap: 3px; }
.fields-rotate { grid-template-columns: 38px 49px 12px; column-gap: 3px; margin-left: 6px; margin-right: 4px; padding-bottom: 0; }
.step { width: 12px; height: 18px; border-radius: 5px; background: #f4f4f4; box-shadow: 0 0 1px #999; color: #222; display: block; }
.step svg { display: block; width: 12px; height: 18px; }
.step:disabled { color: #9a9a9a; background: #e6e6e6; box-shadow: 0 0 1px #bbb; }
.lock { flex: none; width: 18px; height: 22px; margin: 0 4px 0 6px; }
.lock svg, .plain svg { display: block; width: 100%; height: 100%; }
.anchor { align-self: stretch; width: 53px; margin-left: 13px; padding: 6px 4px; background: rgba(0,0,0,.04); border-radius: 4px; display: grid; grid-template-columns: repeat(3, 15px); grid-auto-rows: 16px; place-items: center; }
input[type=radio] { appearance: none; width: 11px; height: 11px; border-radius: 50%; background: #fff; }
.anchor input:checked { width: 12px; height: 12px; background: #fff; border: 4px solid #0a82ff; }
.unit { width: 29px; height: 18px; border-radius: 4px; background: #fff; margin: 0 10px 0 12px; }
.font-box { width: 368px; margin-left: 4px; align-self: stretch; padding-top: 4px; }
.font-row { display: grid; grid-template-columns: 26px 221px 38px 48px 12px; column-gap: 3px; align-items: center; }
.combo { position: relative; height: 18px; background: #fbfbfb; border-radius: 3px; }
.combo input { width: 100%; padding-left: 2px; height: 18px; display: block; }
.combo svg { position: absolute; right: 0; top: 2px; width: 14px; height: 14px; background: #f5f5f5; border-radius: 3px; }
.fh { width: 100%; }
.font-flags { display: grid; grid-template-columns: 109px 107px 1fr; padding-left: 27px; margin-top: 7px; }
.font-flags label { height: 14px; line-height: 14px; white-space: nowrap; }
.toggle { appearance: none; position: relative; display: inline-block; width: 14px; height: 9px; vertical-align: 0; margin-right: 2px; border: 1px solid #222; border-radius: 2px; background: #8c0000; }
.toggle::before { content: ""; position: absolute; left: -1px; top: -1px; width: 8px; height: 9px; border: 1px solid #222; border-radius: 2px; background: #ecdcdc; }
.toggle:checked { background: #0be00b; }
.toggle:checked::before { left: 5px; background: #f0f4f0; }
.toggle:disabled { background: #222; }
.toggle:disabled::before { background: #cfcfcf; }
.toggle:checked:disabled { background: #888; }
.fields-space { grid-template-columns: 46px 46px 12px 40px 74px; column-gap: 3px; }
.fields-space label { white-space: nowrap; }
.style-box { margin: 0 10px 0 6px; width: 118px; display: flex; flex-direction: column; gap: 9px; padding-bottom: 2px; }
.style-box > .select { margin-left: 3px; }
.offset-row { display: grid; grid-template-columns: 36px 68px 12px; column-gap: 1px; align-items: center; }
.select { position: relative; display: block; min-width: 0; color: #333; }
.select select { appearance: none; display: block; width: 100%; height: 18px; border-radius: 4px; background: #fff; padding: 0 20px 0 7px; box-shadow: 0 1px 1px #c9c9c9; }
.select svg { position: absolute; right: 3px; top: 2px; width: 14px; height: 14px; border-radius: 4px; background: #0a7cf5; color: #fff; pointer-events: none; }
.off .select { color: #a9a9a9; }
.off .select select { background: #ebebeb; opacity: 1; color: #a9a9a9; box-shadow: 0 0 1px #bbb; }
.off .select svg { background: none; color: #999; }
.plain { flex: none; width: 22px; height: 22px; margin-left: 4px; }
.more { align-self: flex-start; width: 16px; height: 20px; font-size: 20px; font-weight: 500; line-height: 16px; margin-left: 9px; color: #444; padding-top: 2px; }

/* work area */
.work { flex: 1; display: flex; min-height: 0; }
.side { flex: none; width: 64px; background: linear-gradient(90deg, #efefef, #c6c6c6); border-right: 1px solid #a8a8a8; display: flex; flex-direction: column; align-items: center; gap: 3px; padding: 5px 3px 0 0; }
.side .rule { flex: none; width: 100%; height: 1px; margin: 4px 0 1px; border-top: 1px dotted #8a8a8a; }
.side .rule:first-child { margin: 2px 0 -1px; }
.side .selected { background: #c9c9c9; }
.radius-label { color: #a0a0a0; }
.radius-row { align-self: stretch; margin-right: -3px; display: grid; grid-template-columns: 1fr 12px; column-gap: 2px; padding-right: 1px; align-items: center; }
.radius-row input { text-align: center; }
.docks { flex: 1; min-width: 0; display: flex; flex-direction: column; }
.upper { flex: none; display: grid; grid-template-columns: 810fr 626fr; min-height: 266px; border-bottom: 1px solid #bdbdbd; }
.lower { flex: 1; display: flex; min-height: 0; }
.panel { min-width: 0; display: flex; flex-direction: column; }
.console, .cuts { border-left: 1px solid #8c8c8c; }
.title { flex: none; height: 19px; display: flex; align-items: center; gap: 4px; padding-left: 2px; color: #f2f2f2; font-size: 11px; line-height: 19px; background: linear-gradient(90deg, #000 3%, #3a0a0b 25%, #cf1b29 63%, #e97212); }
.title button { width: 12px; height: 12px; border-radius: 50%; background: #4c4c4c; color: #fff; font-size: 9px; font-weight: 700; line-height: 12px; }
.title svg { display: block; width: 10px; height: 10px; margin: 1px; }
.laser .title { padding-left: 3px; }
.status { padding: 3px 1px 7px; }
.btn { height: 18px; border-radius: 4px; background: #fff; box-shadow: 0 1px 1px #c6c6c6; display: flex; align-items: center; justify-content: center; gap: 5px; color: #111; }
.btn svg { width: 15px; height: 15px; }
.row { display: grid; gap: 4px; padding: 0 7px; }
.three { grid-template-columns: repeat(3, 1fr); }
.four { grid-template-columns: repeat(4, 1fr); margin-top: 12px; }
.halves { display: grid; grid-template-columns: 1fr 1fr; gap: 4px; padding: 0 7px; margin-top: 13px; }
.pair { display: grid; grid-template-columns: 1fr 1fr; gap: 7px; padding-right: 3px; padding-top: 1px; }
.checks { display: flex; flex-direction: column; margin: 38px 0 0 -2px; gap: 2px; }
.checks label:last-child { margin-top: 3px; }
.right { display: flex; flex-direction: column; gap: 4px; padding-right: 3px; }
.origin-grid { display: grid; grid-template-columns: 1fr 189px; gap: 3px 8px; align-items: center; text-align: right; padding-right: 2px; }
.job { height: 48px; display: grid; grid-template-columns: 61px 61px 1fr; grid-template-rows: repeat(3, 13px); padding: 5px 4px; border-radius: 3px; background: #e3e3e3; align-items: center; }
.job input { background: #f1f1f1; }
.job input:checked { border: 3px solid #f1f1f1; background: #aaa; }
.devices { display: grid; grid-template-columns: 69px 352fr 351fr; column-gap: 9px; padding: 0 11px 0 7px; margin-top: 14px; }
.devices .select + .select { margin-left: 2px; }
.grbl i { position: absolute; left: 8px; top: 0; font-size: 8px; font-style: normal; font-weight: 600; line-height: 16px; color: #111; }
.grbl select { padding-left: 26px; }
.console-body { flex: 1; display: flex; flex-direction: column; padding: 3px 5px 6px 7px; }
textarea { flex: 1; resize: none; background: #fff; border: 1px solid #c8c8c8; padding: 3px 4px; line-height: 14px; color: #2a2a2a; outline: 0; }
.command { display: flex; justify-content: space-between; align-items: center; margin: 4px -3px 4px 0; }
.command > input { flex: 0 1 490px; height: 18px; background: #fff; padding: 0 2px; border-bottom: 1px solid #c4c4c4; }
.command ::placeholder { color: #777; }
.command label { white-space: nowrap; }
.command .toggle { margin: 0 0 0 2px; }
.macros { display: grid; grid-template-columns: repeat(3, 1fr); gap: 4px; }

/* drawing canvas */
.canvas { flex: 1; min-width: 0; height: auto; background: #f8faf9; align-self: stretch; }
.ruler text { font: 9px Inter, sans-serif; fill: #858585; }
.mid text { text-anchor: middle; }
.end text { text-anchor: end; }
.axis text { font: 12px Inter, sans-serif; fill: #8c3a3a; }
.logo text { font-family: Inter, sans-serif; fill: #044b59; text-anchor: end; }
.logo .the { font-size: 19px; font-weight: 700; text-anchor: start; }
.logo .cutting { font-size: 45px; font-weight: 900; }
.logo .company { font-size: 32px; font-weight: 400; }

/* cuts panel */
.cuts { flex: 0 0 468px; }
.cuts-body { flex: 1; display: flex; }
.table-wrap { flex: 1; background: #fff; border: solid #ccc; border-width: 0 1px 1px; }
table { width: 100%; border-collapse: collapse; table-layout: fixed; }
.c-num { width: 32px; } .c-layer { width: 36px; } .c-mode { width: 99px; } .c-spd { width: 89px; } .c-out { width: 43px; } .c-show { width: 34px; }
th { height: 17px; padding: 0 0 0 4px; background: #ebebeb; text-align: left; font-weight: 400; font-size: 11px; line-height: 16px; box-shadow: inset -1px 0 #cfcfcf; }
th:first-child { padding-left: 7px; }
td { height: 28px; padding: 0 0 0 5px; white-space: nowrap; }
td .select { width: 88px; }
.active { background: #0560e8; color: #fff; }
.active .select select { box-shadow: 0 0 1px 2px #4a90f8; }
.chip { display: block; width: 27px; height: 19px; margin-left: -1px; text-align: center; font-weight: 400; font-size: 11px; line-height: 18px; color: #fff; }
.blue { background: #3d33ff; }
.teal { background: #044653; }
.tick { text-align: center; padding: 0; }
.tick .toggle { margin: 0 3px 0 0; vertical-align: middle; }
.order { width: 56px; padding: 42px 5px 0 6px; display: flex; flex-direction: column; gap: 1px; }
.order button { width: 44px; height: 44px; background: linear-gradient(#e9e9e9, #f6f8f7); border: 1px solid #b9b9b9; display: grid; place-items: center; }
.order .apart { margin-top: 41px; }
.order svg { width: 12px; height: 12px; fill: none; stroke: #000; stroke-width: 2; }
.order .bin { width: 15px; height: 15px; stroke: none; color: #222; }
.params { display: grid; grid-template-columns: 1fr 48px 12px 87px 48px 12px; gap: 1px 3px; align-items: center; text-align: right; padding: 6px 7px 6px; background: #e3e3e3; margin-top: 2px; white-space: nowrap; }
.params > :first-child, .params > [for=pass], .params > [for=interval] { padding-right: 4px; }
.params input { text-align: right; padding-right: 3px; }
.params > [for=speed], .params > [for=power] { padding-right: 2px; }
.swatch { grid-column: span 2; height: 18px; background: #1a00ff; border: 1px solid #10107a; margin-left: -2px; }

/* layer palette */
.palette { flex: none; height: 28px; display: flex; align-items: center; background: linear-gradient(#f1f1f1, #c9c9c9); }
.palette .grip { margin: 5px 4px 5px 0; }
.colors { display: grid; grid-template-columns: repeat(30, 1fr); width: 805px; }
.colors + .grip { margin-right: 7px; }
.tools-colors { display: flex; gap: 5px; }
.palette button { width: 22px; height: 22px; font-size: 11px; line-height: 22px; color: #111; text-align: center; }
.palette .lt { color: #fff; }
.k00 { background: #000; } .k01 { background: #1400ff; } .k02 { background: #ff0000; } .k03 { background: #00e000; } .k04 { background: #d0d000; }
.k05 { background: #ff8000; } .k06 { background: #00e0e0; } .k07 { background: #ff00ff; } .k08 { background: #b4b4b4; } .k09 { background: #0a00a0; }
.k10 { background: #a80000; } .k11 { background: #00a000; } .k12 { background: #a0a000; } .k13 { background: #c48000; } .k14 { background: #00a0ff; }
.k15 { background: #a800a8; } .k16 { background: #808080; } .k17 { background: #7d87b9; } .k18 { background: #bb7784; } .k19 { background: #4a6fe3; }
.k20 { background: #dc2e63; } .k21 { background: #78d784; } .k22 { background: #f7b680; } .k23 { background: #f9c0e0; } .k24 { background: #f89ad8; }
.k25 { background: #550080; } .k26 { background: #bf5600; } .k27 { background: #044653; } .k28 { background: #55ff78; } .k29 { background: #ffdb40; }
.t1 { background: #ff5c00; } .t2 { background: #0096e0; }
```
